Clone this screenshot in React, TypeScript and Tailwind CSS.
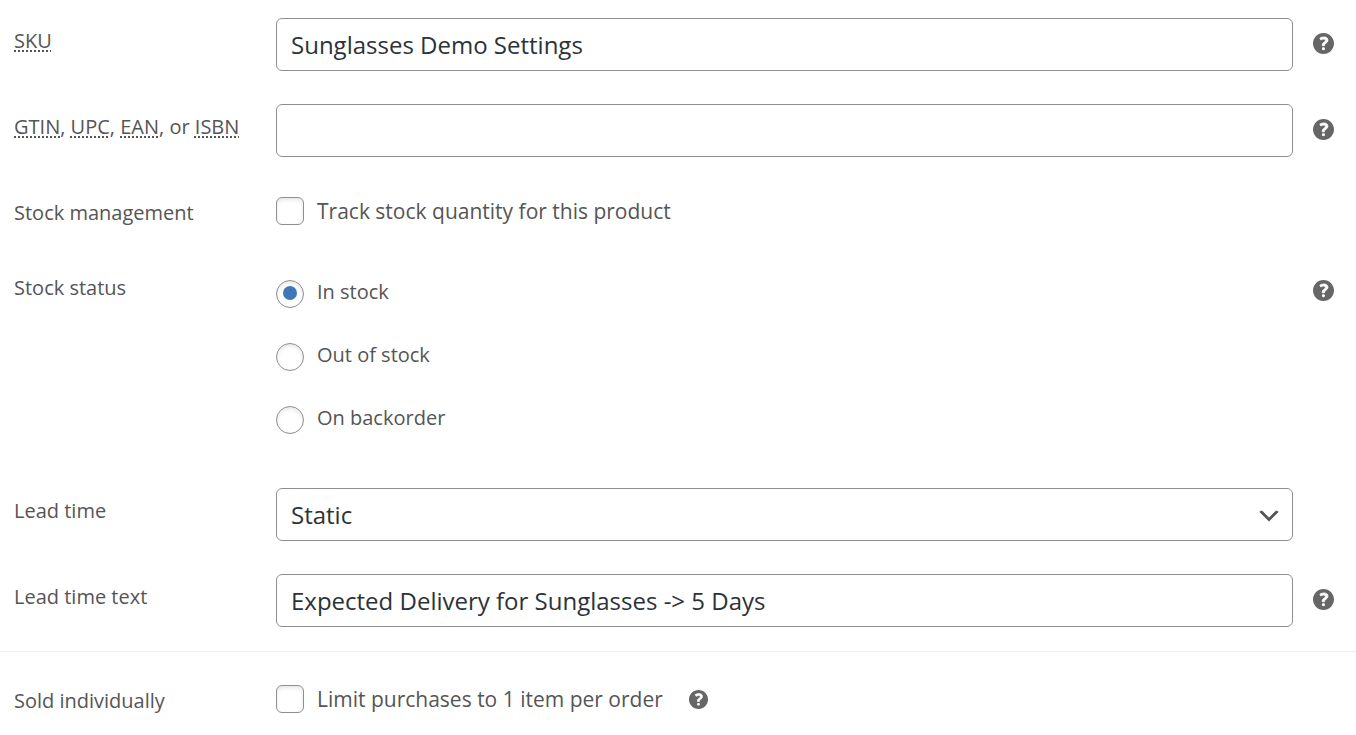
import type { ReactNode } from "react";

const labelClass = "w-[262px] shrink-0 pt-[9px] text-[20px] leading-7";
const fieldClass =
  "h-[53px] w-full rounded-md border border-[#8c8f94] bg-white px-[14px] text-[24px] leading-8 text-[#2c3338] outline-none";
const boxClass =
  "size-7 shrink-0 appearance-none border border-[#8c8f94] bg-white shadow-[inset_0_2px_4px_rgba(0,0,0,0.1)]";

function HelpTip({ label, className = "size-[21px]" }: { label: string; className?: string }) {
  return (
    <button type="button" aria-label={label} className="block shrink-0 rounded-full text-[#666666]">
      <svg viewBox="3 3 14 14" fill="currentColor" aria-hidden="true" className={className}>
        <path d="M17 10c0-3.87-3.14-7-7-7-3.87 0-7 3.13-7 7s3.13 7 7 7c3.86 0 7-3.13 7-7zm-6.3 1.48H9.14v-.43c0-.38.08-.7.24-.98s.46-.57.88-.89c.41-.29.68-.53.81-.71.14-.18.2-.39.2-.62 0-.25-.09-.44-.28-.58-.19-.13-.45-.19-.79-.19-.58 0-1.25.19-2 .57l-.64-1.28c.87-.49 1.8-.74 2.77-.74.81 0 1.45.2 1.92.58.48.39.71.91.71 1.55 0 .43-.09.8-.29 1.11-.19.32-.57.67-1.11 1.06-.38.28-.61.49-.71.63-.1.15-.15.34-.15.57v.35zm-1.47 2.74c-.18-.17-.27-.42-.27-.73 0-.33.08-.58.26-.75s.43-.25.77-.25c.32 0 .57.09.75.26s.27.42.27.74c0 .3-.09.55-.27.72-.18.18-.43.27-.75.27-.33 0-.58-.09-.77-.26z" />
        <path
          fill="none"
          stroke="#ffffff"
          strokeWidth="0.5"
          d="M10.7 11.48H9.14v-.43c0-.38.08-.7.24-.98s.46-.57.88-.89c.41-.29.68-.53.81-.71.14-.18.2-.39.2-.62 0-.25-.09-.44-.28-.58-.19-.13-.45-.19-.79-.19-.58 0-1.25.19-2 .57l-.64-1.28c.87-.49 1.8-.74 2.77-.74.81 0 1.45.2 1.92.58.48.39.71.91.71 1.55 0 .43-.09.8-.29 1.11-.19.32-.57.67-1.11 1.06-.38.28-.61.49-.71.63-.1.15-.15.34-.15.57z"
        />
      </svg>
    </button>
  );
}

function Abbr({ children, title }: { children: ReactNode; title: string }) {
  return (
    <abbr
      title={title}
      className="underline decoration-dotted decoration-2 underline-offset-2 [text-decoration-skip-ink:none]"
    >
      {children}
    </abbr>
  );
}

function Row({ label, help, children }: { label: ReactNode; help?: string; children: ReactNode }) {
  return (
    <div className="flex items-start">
      {label}
      <div className="min-w-0 flex-1">{children}</div>
      <div className="flex w-[63px] shrink-0 justify-center pt-[15px] pr-[2px]">
        {help && <HelpTip label={help} />}
      </div>
    </div>
  );
}

function CheckRow({
  id,
  label,
  text,
  children,
}: {
  id: string;
  label: string;
  text: string;
  children?: ReactNode;
}) {
  return (
    <div className="flex items-start">
      <label htmlFor={id} className={labelClass}>
        {label}
      </label>
      <div className="flex h-[42px] items-center">
        <input id={id} type="checkbox" className={`${boxClass} rounded-md`} />
        <label htmlFor={id} className="ml-[13px] text-[21px] leading-7">
          {text}
        </label>
        {children}
      </div>
    </div>
  );
}

const statuses = ["In stock", "Out of stock", "On backorder"];

export default function App() {
  return (
    <form className="bg-white pb-4 font-['Open_Sans','Noto_Sans',sans-serif] text-[#555555]">
      <div className="flex flex-col gap-[33px] border-b border-[#eeeeee] pt-[18px] pb-6 pl-[14px]">
        <Row
          label={
            <label htmlFor="sku" className={labelClass}>
              <Abbr title="Stock Keeping Unit">SKU</Abbr>
            </label>
          }
          help="SKU help"
        >
          <input id="sku" type="text" defaultValue="Sunglasses Demo Settings" className={fieldClass} />
        </Row>

        <Row
          label={
            <label htmlFor="gtin" className={labelClass}>
              <Abbr title="Global Trade Item Number">GTIN</Abbr>,{" "}
              <Abbr title="Universal Product Code">UPC</Abbr>,{" "}
              <Abbr title="European Article Number">EAN</Abbr>, or{" "}
              <Abbr title="International Standard Book Number">ISBN</Abbr>
            </label>
          }
          help="Product identifier help"
        >
          <input id="gtin" type="text" className={fieldClass} />
        </Row>

        <CheckRow id="manage" label="Stock management" text="Track stock quantity for this product" />

        <Row
          label={
            <span id="status-label" className={labelClass}>
              Stock status
            </span>
          }
          help="Stock status help"
        >
          <div
            role="radiogroup"
            aria-labelledby="status-label"
            className="flex flex-col items-start gap-[35px] pt-[15px] pb-[21px]"
          >
            {statuses.map((status, i) => (
              <label key={status} className="flex h-7 items-start text-[20px] leading-6">
                <input
                  type="radio"
                  name="status"
                  defaultChecked={i === 0}
                  className={`${boxClass} mr-[13px] flex items-start justify-center rounded-full pt-[5px] before:size-[14px] before:rounded-full checked:before:bg-[#3f76b8] checked:before:content-['']`}
                />
                {status}
              </label>
            ))}
          </div>
        </Row>

        <Row
          label={
            <label htmlFor="lead" className={labelClass}>
              Lead time
            </label>
          }
        >
          <div className="relative">
            <select id="lead" className={`${fieldClass} appearance-none`}>
              <option>Static</option>
            </select>
            <svg
              viewBox="0 0 20 20"
              fill="#555555"
              aria-hidden="true"
              className="pointer-events-none absolute top-[14px] right-[10px] size-7"
            >
              <path d="M5 6l5 5 5-5 2 1-7 7-7-7 2-1z" />
            </svg>
          </div>
        </Row>

        <Row
          label={
            <label htmlFor="lead-text" className={labelClass}>
              Lead time text
            </label>
          }
          help="Lead time text help"
        >
          <input
            id="lead-text"
            type="text"
            defaultValue="Expected Delivery for Sunglasses -> 5 Days"
            className={fieldClass}
          />
        </Row>
      </div>

      <div className="pt-[26px] pl-[14px]">
        <CheckRow id="sold" label="Sold individually" text="Limit purchases to 1 item per order">
          <div className="ml-[26px]">
            <HelpTip label="Sold individually help" className="size-[19px]" />
          </div>
        </CheckRow>
      </div>
    </form>
  );
}
